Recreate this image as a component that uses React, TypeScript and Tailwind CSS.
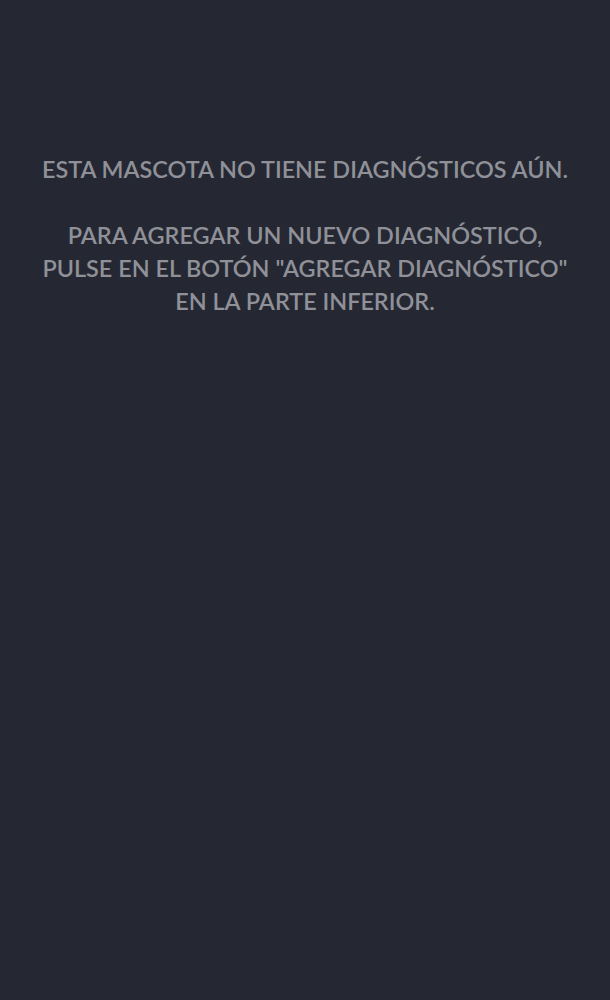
import React from "react";

const App = () => {
  return (
    <div className="min-h-screen w-full bg-[#252833] flex flex-col items-center pt-[153px] px-4">
      <p
        className="text-center text-[23.4px] leading-[33px] font-semibold uppercase text-[#909198] whitespace-pre-line"
        style={{ fontFamily: "Lato, 'Noto Sans', sans-serif" }}
      >
        {"Esta mascota no tiene diagnósticos aún.\n\nPara agregar un nuevo diagnóstico,\npulse en el botón \"Agregar diagnóstico\"\nen la parte inferior."}
      </p>
    </div>
  );
};

export default App;
